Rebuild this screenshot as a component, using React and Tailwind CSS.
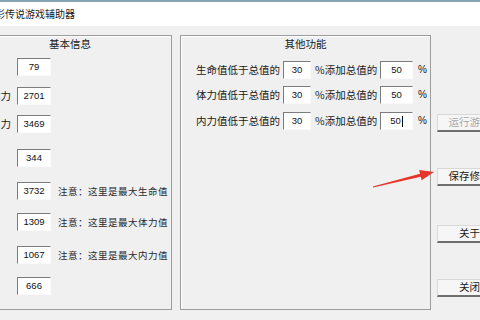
const font = { fontFamily: '"Noto Sans CJK SC", "Liberation Sans", sans-serif' };

const Box = ({ value, w, caret }) => (
  <div
    className={`${w} h-[18px] shrink-0 bg-white border-t border-l border-[#7c7c7c] border-r border-b border-r-[#fafafa] border-b-[#fafafa] flex items-center justify-center text-[9.5px] text-[#111]`}
    style={{ fontFamily: '"Liberation Sans", sans-serif' }}
  >
    {value}
    {caret && <span className="w-px h-[11px] bg-black ml-[1px]" />}
  </div>
);

const basicRows = [
  { label: "等级", value: "79", mt: "mt-[8px]" },
  { label: "当前体力", value: "2701", mt: "mt-[11px]" },
  { label: "当前内力", value: "3469", mt: "mt-[10px]" },
  { label: "金钱", value: "344", mt: "mt-[16px]" },
  { label: "生命", value: "3732", mt: "mt-[15px]", note: "注意：这里是最大生命值" },
  { label: "体力", value: "1309", mt: "mt-[13px]", note: "注意：这里是最大体力值" },
  { label: "内力", value: "1067", mt: "mt-[15px]", note: "注意：这里是最大内力值" },
  { label: "经验", value: "666", mt: "mt-[13px]" },
];

const otherRows = [
  { label: "生命值低于总值的", mt: "mt-[11px]" },
  { label: "体力值低于总值的", mt: "mt-[7px]" },
  { label: "内力值低于总值的", mt: "mt-[8px]", caret: true },
];

const buttons = [
  { text: "运行游戏", mt: "mt-[79px]", disabled: true },
  { text: "保存修改", mt: "mt-[36px]" },
  { text: "关于", mt: "mt-[39px]" },
  { text: "关闭", mt: "mt-[36px]" },
];

export default function App() {
  return (
    <div className="relative w-[480px] h-[320px] overflow-hidden bg-[#f0f0f0] text-[#1a1a1a]" style={font}>
      <div className="h-[26px] bg-white border-t-2 border-[#86a4b2] flex items-center">
        <span className="ml-[-5px] text-[10px] leading-none">彩传说游戏辅助器</span>
      </div>

      <div className="flex items-start pt-[9px]">
        {/* 基本信息 */}
        <div className="ml-[-32px] w-[204px] h-[275px] shrink-0 border border-[#9c9c9c] shadow-[inset_1px_1px_0_#ffffff]">
          <div className="text-center text-[10.5px] leading-[13px] mt-[1px]">基本信息</div>
          {basicRows.map((r) => (
            <div key={r.value} className={`flex items-center ${r.mt}`}>
              <span className="w-[48px] shrink-0 text-[10.5px] leading-none whitespace-nowrap overflow-hidden">{r.label}</span>
              <Box value={r.value} w="w-[34px]" />
              {r.note && (
                <span className="ml-[7px] text-[9.5px] tracking-[0.5px] text-[#2a2a2a] whitespace-nowrap">{r.note}</span>
              )}
            </div>
          ))}
        </div>

        {/* 其他功能 */}
        <div className="ml-[8px] w-[251px] h-[275px] shrink-0 border border-[#9c9c9c] shadow-[inset_1px_1px_0_#ffffff]">
          <div className="text-center text-[10.5px] leading-[13px] mt-[1px]">其他功能</div>
          {otherRows.map((r) => (
            <div key={r.label} className={`flex items-center pl-[15px] ${r.mt}`}>
              <span className="w-[87px] shrink-0 text-[10.5px] leading-none whitespace-nowrap">{r.label}</span>
              <Box value="30" w="w-[28px]" />
              <span className="w-[69px] shrink-0 pl-[4px] text-[10.5px] leading-none whitespace-nowrap">%添加总值的</span>
              <Box value="50" w="w-[33px]" caret={r.caret} />
              <span className="ml-[5px] text-[10px] leading-none" style={{ fontFamily: '"Liberation Sans", sans-serif' }}>%</span>
            </div>
          ))}
        </div>

        {/* buttons */}
        <div className="ml-[6px] w-[64px] shrink-0 flex flex-col">
          {buttons.map((b) => (
            <div
              key={b.text}
              className={`${b.mt} h-[18px] bg-[#f6f6f6] border-t border-l border-[#d8d8d8] border-b-2 border-b-[#6e6e6e] flex items-center justify-center text-[10.5px] leading-none whitespace-nowrap ${b.disabled ? "text-[#a6a6a6]" : "text-[#1a1a1a]"}`}
            >
              {b.text}
            </div>
          ))}
        </div>
      </div>

      <svg className="absolute left-0 top-0 pointer-events-none" width="480" height="320" viewBox="0 0 480 320">
        <polygon
          points="372.9,186.5 420,173.8 419.2,170.1 434,172 421.6,180.2 420.8,176.8 373.1,187.5"
          fill="#e8352b"
        />
      </svg>
    </div>
  );
}
